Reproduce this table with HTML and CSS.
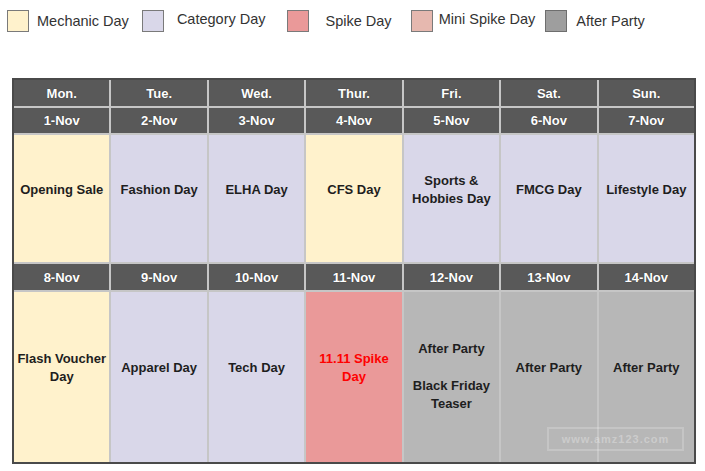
FILE: index.html
```html
<!DOCTYPE html>
<html>
<head>
<meta charset="utf-8">
<link rel="stylesheet" href="styles.css">
</head>
<body>
<div class="legend">
  <div class="legend-item gap-a"><span class="swatch mechanic"></span><span class="label">Mechanic Day</span></div>
  <div class="legend-item gap-b raised"><span class="swatch category"></span><span class="label wide">Category Day</span></div>
  <div class="legend-item gap-c"><span class="swatch spike"></span><span class="label wide2">Spike Day</span></div>
  <div class="legend-item gap-d raised"><span class="swatch mini"></span><span class="label narrow">Mini Spike Day</span></div>
  <div class="legend-item"><span class="swatch after"></span><span class="label narrow2">After Party</span></div>
</div>

<div class="calendar-wrap">
  <div class="calendar">
    <div class="head">Mon.</div>
    <div class="head">Tue.</div>
    <div class="head">Wed.</div>
    <div class="head">Thur.</div>
    <div class="head">Fri.</div>
    <div class="head">Sat.</div>
    <div class="head">Sun.</div>

    <div class="head">1-Nov</div>
    <div class="head">2-Nov</div>
    <div class="head">3-Nov</div>
    <div class="head">4-Nov</div>
    <div class="head">5-Nov</div>
    <div class="head">6-Nov</div>
    <div class="head">7-Nov</div>

    <div class="cell mechanic">Opening Sale</div>
    <div class="cell category">Fashion Day</div>
    <div class="cell category">ELHA Day</div>
    <div class="cell mechanic">CFS Day</div>
    <div class="cell category">Sports &amp;<br>Hobbies Day</div>
    <div class="cell category">FMCG Day</div>
    <div class="cell category">Lifestyle Day</div>

    <div class="head">8-Nov</div>
    <div class="head">9-Nov</div>
    <div class="head">10-Nov</div>
    <div class="head">11-Nov</div>
    <div class="head">12-Nov</div>
    <div class="head">13-Nov</div>
    <div class="head">14-Nov</div>

    <div class="cell mechanic">Flash Voucher<br>Day</div>
    <div class="cell category">Apparel Day</div>
    <div class="cell category">Tech Day</div>
    <div class="cell spike spike-text">11.11 Spike<br>Day</div>
    <div class="cell after multi"><span class="stack">After Party</span><span class="stack">Black Friday<br>Teaser</span></div>
    <div class="cell after">After Party</div>
    <div class="cell after">After Party</div>
  </div>
  <div class="watermark">www.amz123.com</div>
</div>
</body>
</html>
```

FILE: styles.css
```css
html, body {
  margin: 0;
  padding: 0;
  background: #ffffff;
}

body {
  font-family: "Liberation Sans", Arial, sans-serif;
  color: #1a1a1a;
  width: 705px;
  height: 471px;
  overflow: hidden;
}

.legend {
  display: flex;
  align-items: center;
  padding: 10px 0 0 7px;
  height: 22px;
}

.legend-item {
  display: flex;
  align-items: center;
}

.legend-item.raised .label {
  position: relative;
  top: -2px;
}

.gap-a { margin-right: 13px; }
.gap-b { margin-right: 21px; }
.gap-c { margin-right: 19px; }
.gap-d { margin-right: 10px; }

.swatch {
  display: block;
  width: 20px;
  height: 20px;
  border: 1px solid #7a7a7a;
  box-sizing: content-box;
}

.label {
  font-size: 14.5px;
  color: #333;
  margin-left: 8px;
  white-space: nowrap;
}

.label.wide { margin-left: 13px; }
.label.wide2 { margin-left: 17px; }
.label.narrow { margin-left: 6px; }
.label.narrow2 { margin-left: 9px; }

.swatch.mechanic { background: #fff2cc; }
.swatch.category { background: #d9d7e9; }
.swatch.spike { background: #ea9999; }
.swatch.mini { background: #e6b8af; }
.swatch.after { background: #9e9e9e; border-color: #6e6e6e; }

.calendar-wrap {
  position: relative;
  margin: 46px 0 0 12px;
  width: 684px;
}

.calendar {
  display: grid;
  grid-template-columns: repeat(7, 1fr);
  grid-template-rows: 26px 25px 127px 26px 170px;
  gap: 2px;
  background: #c6c6c6;
  border: 2px solid #4a4a4a;
  box-sizing: border-box;
  width: 684px;
}

.head {
  background: #595959;
  color: #ffffff;
  font-weight: bold;
  font-size: 13px;
  display: flex;
  align-items: center;
  justify-content: center;
  text-shadow: 0 0 1px #333;
}

.cell {
  display: flex;
  flex-direction: column;
  align-items: center;
  justify-content: center;
  text-align: center;
  font-weight: bold;
  font-size: 13px;
  line-height: 18px;
  color: #1e1e1e;
  padding-bottom: 18px;
}

.cell.multi {
  padding-bottom: 2px;
}

.cell.mechanic { background: #fff2cc; }
.cell.category { background: #d9d7e9; }
.cell.spike { background: #ea9999; }
.cell.after { background: #b7b7b7; }

.spike-text { color: #ff0000; }

.stack {
  display: block;
}

.stack + .stack {
  margin-top: 19px;
}

.watermark {
  position: absolute;
  right: 12px;
  bottom: 13px;
  width: 137px;
  height: 24px;
  border: 2px solid rgba(255, 255, 255, 0.2);
  box-sizing: border-box;
  color: rgba(255, 255, 255, 0.3);
  font-size: 11px;
  font-weight: bold;
  letter-spacing: 1px;
  display: flex;
  align-items: center;
  justify-content: center;
}
```
